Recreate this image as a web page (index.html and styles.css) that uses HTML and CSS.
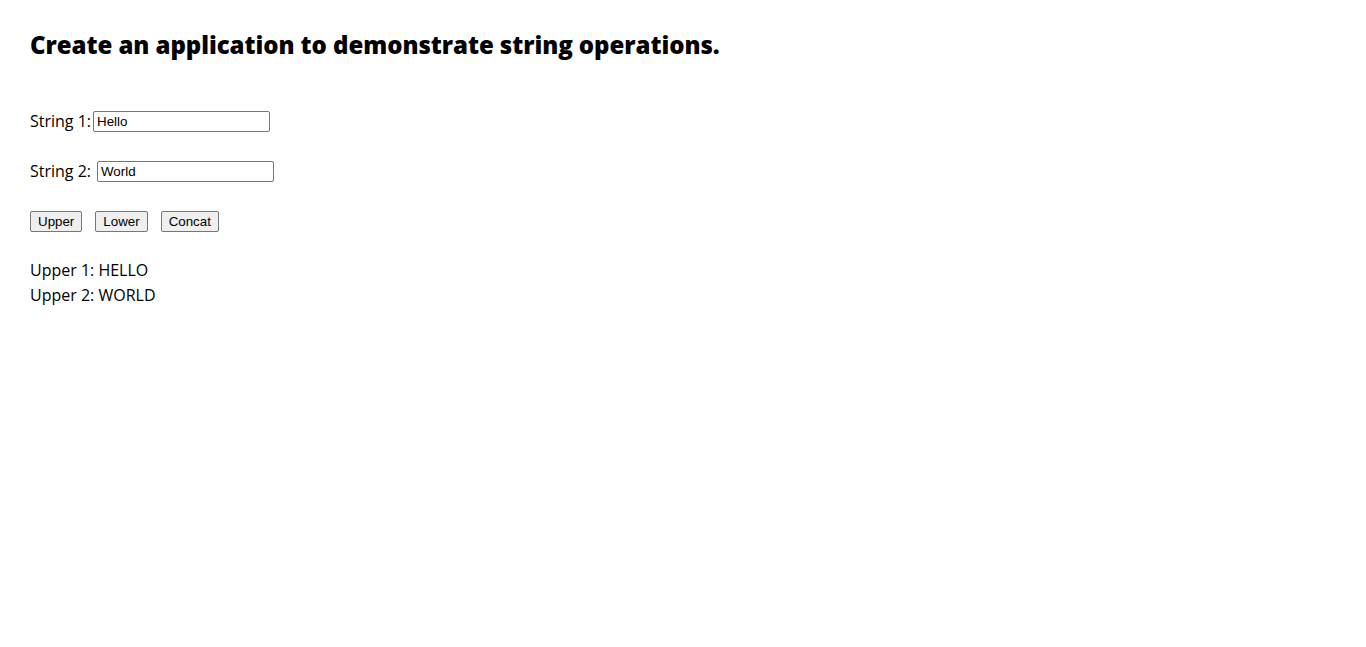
FILE: index.html
```html
<!DOCTYPE html>
<html lang="en">
<head>
<meta charset="utf-8">
<title>String operations</title>
<link rel="stylesheet" href="styles.css">
</head>
<body>
<h1 class="title">Create an application to demonstrate string operations.</h1>
<div class="form">
  <div class="row"><label class="label" for="s1">String 1:</label><input class="field" id="s1" type="text" value="Hello"></div>
  <div class="row"><label class="label label-2" for="s2">String 2:</label><input class="field" id="s2" type="text" value="World"></div>
  <div class="row buttons">
    <button class="btn" type="button">Upper</button>
    <button class="btn" type="button">Lower</button>
    <button class="btn" type="button">Concat</button>
  </div>
</div>
<div class="output">
  <div class="line">Upper 1: HELLO</div>
  <div class="line">Upper 2: WORLD</div>
</div>
</body>
</html>
```
FILE: styles.css
```css
html, body {
  margin: 0;
  background: #fff;
}
body {
  padding: 30px;
  font-family: "Open Sans", "DejaVu Sans", sans-serif;
  color: #000;
}
.title {
  margin: 0;
  font-size: 24px;
  line-height: 30px;
  font-weight: 800;
  letter-spacing: -0.05px;
}
.form {
  margin-top: 49px;
  display: flex;
  flex-direction: column;
  gap: 26px;
}
.row {
  display: flex;
  align-items: center;
  height: 24px;
  font-size: 16px;
  gap: 3px;
}
.label {
  font-size: 16px;
  width: 60px;
  white-space: nowrap;
}
.label-2 {
  width: 64px;
}
.field {
  box-sizing: border-box;
  width: 177px;
  height: 21px;
  margin: 0;
  padding: 1px 3px;
  border: 1px solid #767676;
  border-radius: 2px;
  font-family: "Liberation Sans", Arial, sans-serif;
  font-size: 13.33px;
  color: #000;
}
.buttons {
  gap: 13px;
}
.btn {
  box-sizing: border-box;
  height: 21px;
  margin: 0;
  padding: 1px 7px;
  border: 1px solid #767676;
  border-radius: 2px;
  background: #efefef;
  font-family: "Liberation Sans", Arial, sans-serif;
  font-size: 13.33px;
  color: #000;
}
.output {
  margin-top: 25px;
  font-size: 16px;
  line-height: 25px;
}
```
